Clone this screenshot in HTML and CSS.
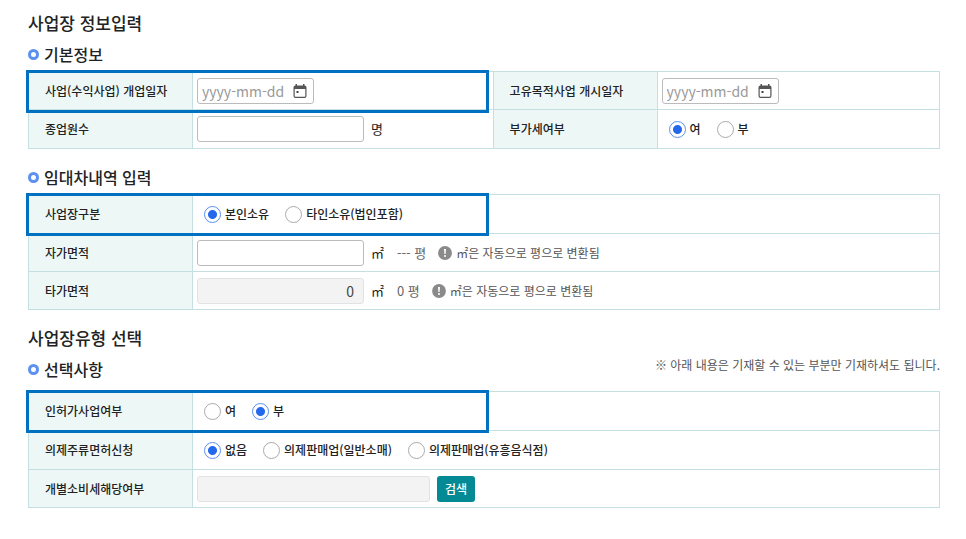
FILE: index.html
```html
<!DOCTYPE html>
<html lang="ko">
<head>
  <meta charset="UTF-8" />
  <meta name="viewport" content="width=device-width, initial-scale=1.0"/>
  <title>사업장 정보입력</title>
  <link rel="stylesheet" href="styles.css">
</head>
<body>
  <!-- 공통 아이콘 -->
  <svg class="sprite" width="0" height="0">
    <symbol id="calendar" viewBox="0 0 14 14">
      <path d="M2.500 0H4v1.500h6V0h1.500v1.500q2 0 2 2v8.500q0 2-2 2h-9q-2 0-2-2V3.500q0-2 2-2zM1.700 5v7q0 .8.8.8h9q.8 0 .8-.8V5z" fill="#555"/>
      <rect x="3.500" y="7" width="2" height="2" fill="#444"/>
    </symbol>
    <symbol id="info" viewBox="0 0 14 14">
      <circle cx="7" cy="7" r="6.900" fill="#8a8a8a"/>
      <path d="M6 3h2l-.4 5H6.400z" fill="#fff"/>
      <circle cx="7" cy="10" r="1" fill="#fff"/>
    </symbol>
  </svg>

  <main>
    <h1>사업장 정보입력</h1>
    <h2>기본정보</h2>
    <div class="table-wrap">
      <table>
        <colgroup><col class="col-th"><col class="col-td"><col class="col-th"><col></colgroup>
        <tr>
          <th><label for="openDate">사업(수익사업) 개업일자</label></th>
          <td>
            <div class="date">
              <input type="text" id="openDate" placeholder="yyyy-mm-dd">
              <button type="button" aria-label="달력"><svg><use href="#calendar"/></svg></button>
            </div>
          </td>
          <th><label for="startDate">고유목적사업 개시일자</label></th>
          <td>
            <div class="date">
              <input type="text" id="startDate" placeholder="yyyy-mm-dd">
              <button type="button" aria-label="달력"><svg><use href="#calendar"/></svg></button>
            </div>
          </td>
        </tr>
        <tr class="row-radio">
          <th><label for="empCount">종업원수</label></th>
          <td>
            <div class="field">
              <input type="text" id="empCount" class="text">
              <span class="unit">명</span>
            </div>
          </td>
          <th>부가세여부</th>
          <td>
            <div class="radios">
              <label><input type="radio" name="vat" checked>여</label>
              <label><input type="radio" name="vat">부</label>
            </div>
          </td>
        </tr>
      </table>
      <div class="highlight"></div>
    </div>

    <h2>임대차내역 입력</h2>
    <div class="table-wrap">
      <table>
        <colgroup><col class="col-th"><col></colgroup>
        <tr class="row-radio">
          <th>사업장구분</th>
          <td>
            <div class="radios">
              <label><input type="radio" name="place" checked>본인소유</label>
              <label><input type="radio" name="place">타인소유(법인포함)</label>
            </div>
          </td>
        </tr>
        <tr>
          <th><label for="ownArea">자가면적</label></th>
          <td>
            <div class="field">
              <input type="text" id="ownArea" class="text">
              <span class="unit">㎡</span>
              <span class="pyeong">--- 평</span>
              <span class="hint"><svg><use href="#info"/></svg>㎡은 자동으로 평으로 변환됨</span>
            </div>
          </td>
        </tr>
        <tr>
          <th><label for="rentArea">타가면적</label></th>
          <td>
            <div class="field">
              <input type="text" id="rentArea" class="text" value="0" disabled>
              <span class="unit">㎡</span>
              <span class="pyeong">0 평</span>
              <span class="hint"><svg><use href="#info"/></svg>㎡은 자동으로 평으로 변환됨</span>
            </div>
          </td>
        </tr>
      </table>
      <div class="highlight"></div>
    </div>

    <h1>사업장유형 선택</h1>
    <div class="title-row">
      <h2>선택사항</h2>
      <p>※ 아래 내용은 기재할 수 있는 부분만 기재하셔도 됩니다.</p>
    </div>
    <div class="table-wrap">
      <table>
        <colgroup><col class="col-th"><col></colgroup>
        <tr class="row-radio">
          <th>인허가사업여부</th>
          <td>
            <div class="radios">
              <label><input type="radio" name="permit">여</label>
              <label><input type="radio" name="permit" checked>부</label>
            </div>
          </td>
        </tr>
        <tr class="row-radio">
          <th>의제주류면허신청</th>
          <td>
            <div class="radios">
              <label><input type="radio" name="liquor" checked>없음</label>
              <label><input type="radio" name="liquor">의제판매업(일반소매)</label>
              <label><input type="radio" name="liquor">의제판매업(유흥음식점)</label>
            </div>
          </td>
        </tr>
        <tr>
          <th><label for="tax">개별소비세해당여부</label></th>
          <td>
            <div class="field">
              <input type="text" id="tax" class="text wide" disabled>
              <button type="button" class="search">검색</button>
            </div>
          </td>
        </tr>
      </table>
      <div class="highlight"></div>
    </div>
  </main>
</body>
</html>
```

FILE: styles.css
```css
* {
  box-sizing: border-box;
}

body {
  margin: 0;
  background-color: #fff;
  color: #222;
  font-family: "Noto Sans CJK KR", sans-serif;
  font-size: 12px;
  line-height: 18px;
}

.sprite {
  position: absolute;
}

main {
  padding: 11px 26px 30px 28px;
}

h1 {
  margin: 0 0 7px;
  font-size: 17px;
  line-height: 24px;
  font-weight: 500;
}

h2 {
  display: flex;
  align-items: center;
  gap: 5px;
  margin: 0 0 5px;
  font-size: 16px;
  line-height: 24px;
  font-weight: 500;
}

h2::before {
  content: "";
  box-sizing: border-box;
  width: 11px;
  height: 11px;
  border: 3px solid #5b8ff0;
  border-radius: 50%;
}

.title-row {
  display: flex;
  justify-content: space-between;
  margin-bottom: 5px;
}

.title-row p {
  margin: 0;
  color: #555;
  line-height: 16px;
}

.table-wrap {
  position: relative;
  margin-bottom: 16px;
}

table {
  width: 100%;
  border-collapse: collapse;
  table-layout: fixed;
}

.col-th {
  width: 18%;
}

.col-td {
  width: 33%;
}

th,
td {
  height: 38px;
  padding: 0 4px;
  border: 1px solid #c5e0e3;
}

.row-radio th,
.row-radio td {
  height: 39px;
}

th {
  padding-left: 16px;
  background-color: #edf7f6;
  font-weight: 500;
  text-align: left;
}

/* 필수 확인 항목 강조 */
.highlight {
  position: absolute;
  top: -1px;
  left: -2px;
  width: calc(51% - 2px);
  height: 43px;
  border: 3px solid #0070c0;
  pointer-events: none;
}

input,
button {
  margin: 0;
  font-family: inherit;
}

.date {
  display: flex;
  align-items: center;
  width: 117px;
  height: 26px;
  padding: 0 6px 0 4px;
  border: 1px solid #bbb;
  border-radius: 3px;
}

.date input {
  flex: 1;
  min-width: 0;
  padding: 0;
  border: 0;
  font-size: 14px;
}

.date input::placeholder {
  color: #999;
}

.date button {
  padding: 0;
  border: 0;
  background: none;
}

svg {
  display: block;
  width: 14px;
  height: 14px;
}

.field {
  display: flex;
  align-items: center;
  gap: 7px;
}

.text {
  width: 167px;
  height: 26px;
  padding: 0 9px;
  border: 1px solid #bbb;
  border-radius: 3px;
  font-size: 14px;
  text-align: right;
}

.text.wide {
  width: 233px;
}

.text:disabled {
  border-color: #e2e2e4;
  background-color: #f3f3f3;
  color: #444;
}

.unit {
  font-size: 13px;
}

.pyeong {
  margin: 0 5px 0 6px;
  color: #666;
  font-size: 13px;
}

.hint {
  display: flex;
  align-items: center;
  gap: 4px;
  color: #555;
}

.radios {
  display: flex;
  gap: 16px;
  padding-left: 7px;
}

.radios label {
  display: flex;
  align-items: center;
  gap: 4px;
  font-weight: 500;
}

.radios input {
  appearance: none;
  width: 17px;
  height: 17px;
  border: 1px solid #aaa;
  border-radius: 50%;
  background-color: #fff;
}

.radios input:checked {
  border-color: #5b8ff0;
  background-image: radial-gradient(circle, #2468eb 4px, transparent 5px);
}

.search {
  height: 26px;
  padding: 0 8px;
  border: 0;
  border-radius: 3px;
  background-color: #048a94;
  color: #fff;
  font-size: 12px;
  font-weight: 500;
}
```
